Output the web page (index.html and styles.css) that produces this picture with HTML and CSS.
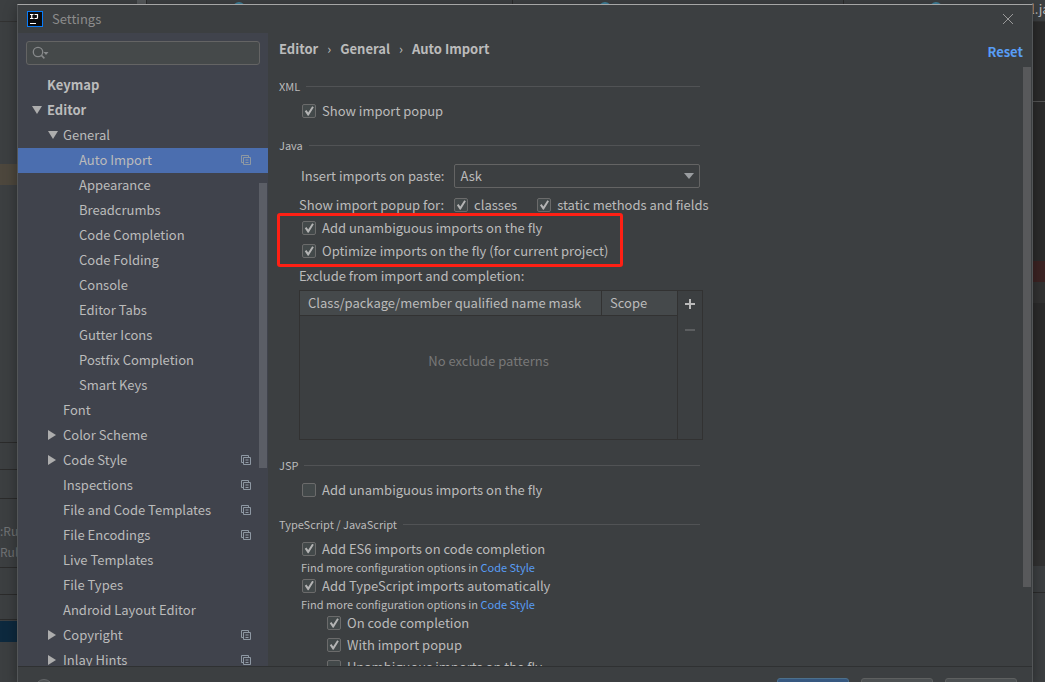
FILE: index.html
```
<!DOCTYPE html>
<html lang="en">
<head>
<meta charset="utf-8">
<title>Settings</title>
<link rel="stylesheet" href="styles.css">
</head>
<body>
<svg class="defs" aria-hidden="true">
  <symbol id="copy" viewBox="0 0 10 10"><path d="M2.5 7.5H.5V.5h7v2M2.5 2.5h7v7h-7zM4.5 5h3M4.5 7.5h3" fill="none" stroke="currentColor"/></symbol>
  <symbol id="down" viewBox="0 0 10 8"><path d="M0 0h10L5 8z" fill="currentColor"/></symbol>
  <symbol id="caret" viewBox="0 0 10 6"><path d="M0 0h10L5 6z" fill="currentColor"/></symbol>
  <symbol id="right" viewBox="0 0 8 10"><path d="M0 0v10l8-5z" fill="currentColor"/></symbol>
</svg>
<div class="ide">
  <div class="tabs">
    <span class="tabs-block"></span>
    <span class="tab"><i class="dot"></i></span>
    <span class="tab second"><i class="dot"></i></span>
    <span class="tab third"><i class="dot"></i></span>
    <span class="tab-name">l.java</span>
  </div>
  <div class="ide-body">
    <div class="left-strip">
      <span class="band brown"></span>
      <span class="rule r1"></span>
      <span class="rule r2"></span>
      <span class="rule r3"></span>
      <span class="log first">:Rule</span>
      <span class="log">Rule</span>
      <span class="rule r4"></span>
      <span class="rule r5"></span>
      <span class="rule r6"></span>
      <span class="band blue"></span>
    </div>
    <div class="right-strip">
      <span class="line"></span>
      <span class="band red"></span>
      <span class="band gray"></span>
      <span class="band gray low"></span>
      <span class="panel"><span class="rule"></span></span>
    </div>
  </div>
</div>

<div class="dialog" role="dialog" aria-label="Settings">
  <header class="titlebar">
    <svg class="logo" viewBox="0 0 16 16"><rect x=".5" y=".5" width="15" height="15" fill="#0b0b0d" stroke="#087cfa"/><path d="M3 3.500h3.500M4.750 3v5M3 7.500h3.500M7.500 3.500h3v3q0 1-1 1H7.500" fill="none" stroke="#fff" stroke-width="1.200"/><path d="M3 12.500h6" stroke="#fff"/></svg>
    <span class="title">Settings</span>
    <button class="close" aria-label="Close"><svg viewBox="0 0 10 10"><path d="M0 0l10 10M10 0L0 10" stroke="currentColor"/></svg></button>
  </header>
  <div class="body">
    <aside class="sidebar">
      <label class="search">
        <svg viewBox="0 0 18 14"><circle cx="6" cy="6" r="4.7" fill="none" stroke="currentColor" stroke-width="1.3"/><path d="M9.4 9.4l3 3" stroke="currentColor" stroke-width="1.5"/><path d="M11.500 6h5l-2.500 3z" fill="currentColor"/></svg>
        <input type="text" aria-label="Search settings">
      </label>
      <ul class="tree">
        <li class="bold l0"><span>Keymap</span></li>
        <li class="bold l0"><svg class="arrow down"><use href="#down"/></svg><span>Editor</span></li>
        <li class="l1"><svg class="arrow down"><use href="#down"/></svg><span>General</span></li>
        <li class="l2 selected"><span>Auto Import</span><svg class="copy"><use href="#copy"/></svg></li>
        <li class="l2"><span>Appearance</span></li>
        <li class="l2"><span>Breadcrumbs</span></li>
        <li class="l2"><span>Code Completion</span></li>
        <li class="l2"><span>Code Folding</span></li>
        <li class="l2"><span>Console</span></li>
        <li class="l2"><span>Editor Tabs</span></li>
        <li class="l2"><span>Gutter Icons</span></li>
        <li class="l2"><span>Postfix Completion</span></li>
        <li class="l2"><span>Smart Keys</span></li>
        <li class="l1"><span>Font</span></li>
        <li class="l1"><svg class="arrow right"><use href="#right"/></svg><span>Color Scheme</span></li>
        <li class="l1"><svg class="arrow right"><use href="#right"/></svg><span>Code Style</span><svg class="copy"><use href="#copy"/></svg></li>
        <li class="l1"><span>Inspections</span><svg class="copy"><use href="#copy"/></svg></li>
        <li class="l1"><span>File and Code Templates</span><svg class="copy"><use href="#copy"/></svg></li>
        <li class="l1"><span>File Encodings</span><svg class="copy"><use href="#copy"/></svg></li>
        <li class="l1"><span>Live Templates</span></li>
        <li class="l1"><span>File Types</span></li>
        <li class="l1"><span>Android Layout Editor</span></li>
        <li class="l1"><svg class="arrow right"><use href="#right"/></svg><span>Copyright</span><svg class="copy"><use href="#copy"/></svg></li>
        <li class="l1"><svg class="arrow right"><use href="#right"/></svg><span>Inlay Hints</span><svg class="copy"><use href="#copy"/></svg></li>
      </ul>
      <div class="thumb side-thumb"></div>
    </aside>
    <main class="main">
      <div class="head">
        <nav class="crumbs"><span>Editor</span><i>›</i><span>General</span><i>›</i><span>Auto Import</span></nav>
        <a class="reset" href="#">Reset</a>
      </div>
      <form class="content">
        <section>
          <h2>XML</h2>
          <label class="check"><input type="checkbox" checked>Show import popup</label>
        </section>
        <section>
          <h2>Java</h2>
          <div class="field"><label for="paste">Insert imports on paste:</label>
            <span class="select"><select id="paste"><option>Ask</option></select><svg class="caret"><use href="#caret"/></svg></span></div>
          <div class="popup-for"><span>Show import popup for:</span>
            <label class="check"><input type="checkbox" checked>classes</label>
            <label class="check"><input type="checkbox" checked>static methods and fields</label></div>
          <div class="marked">
            <label class="check"><input type="checkbox" checked>Add unambiguous imports on the fly</label>
            <label class="check"><input type="checkbox" checked>Optimize imports on the fly (for current project)</label>
          </div>
          <p class="exclude">Exclude from import and completion:</p>
          <div class="patterns">
            <table>
              <thead><tr><th>Class/package/member qualified name mask</th><th class="scope">Scope</th></tr></thead>
              <tbody><tr><td colspan="2">No exclude patterns</td></tr></tbody>
            </table>
            <div class="tools">
              <button type="button" aria-label="Add"><svg viewBox="0 0 10 10"><path d="M0 5h10M5 0v10" stroke="currentColor" stroke-width="2"/></svg></button>
              <button type="button" aria-label="Remove" disabled><svg viewBox="0 0 10 10"><path d="M0 5h10" stroke="currentColor" stroke-width="2"/></svg></button>
            </div>
          </div>
        </section>
        <section>
          <h2>JSP</h2>
          <label class="check"><input type="checkbox">Add unambiguous imports on the fly</label>
        </section>
        <section>
          <h2>TypeScript / JavaScript</h2>
          <label class="check tight"><input type="checkbox" checked>Add ES6 imports on code completion</label>
          <p class="hint">Find more configuration options in <a href="#">Code Style</a></p>
          <label class="check tight"><input type="checkbox" checked>Add TypeScript imports automatically</label>
          <p class="hint">Find more configuration options in <a href="#">Code Style</a></p>
          <div class="nested">
            <label class="check"><input type="checkbox" checked>On code completion</label>
            <label class="check"><input type="checkbox" checked>With import popup</label>
            <label class="check"><input type="checkbox">Unambiguous imports on the fly</label>
          </div>
        </section>
      </form>
      <div class="thumb main-thumb"></div>
    </main>
  </div>
  <footer class="footer">
    <button class="help" aria-label="Help"></button>
    <button class="btn primary" aria-label="OK"></button>
    <button class="btn" aria-label="Cancel"></button>
    <button class="btn" aria-label="Apply"></button>
  </footer>
</div>
</body>
</html>
```
FILE: styles.css
```
*, *::before, *::after { box-sizing: border-box; }
body {
  margin: 0;
  height: 100vh;
  overflow: hidden;
  position: relative;
  background: #3c3f41;
  color: #bbbbbb;
  font: 13px/20px "Noto Sans CJK SC", "Noto Sans", sans-serif;
}
h2, p, ul { margin: 0; padding: 0; font-weight: normal; }
button, input, select { font: inherit; color: inherit; margin: 0; padding: 0; }
a { color: #589df6; text-decoration: none; }
.defs { position: absolute; width: 0; height: 0; }

/* IDE window behind the dialog */
.ide { height: 100%; display: flex; flex-direction: column; }
.tabs { display: flex; height: 22px; border-bottom: 1px solid #323232; overflow: hidden; }
.tabs-block { flex: none; width: 9px; margin-left: 137px; background: #55585a; }
.tab { flex: 0 0 366px; border-left: 1px solid #2b2b2b; padding: 2px 0 0 86px; }
.tab.second { flex-basis: 331px; }
.tab.third { flex-basis: 188px; }
.dot { display: block; width: 12px; height: 12px; border-radius: 50%; background: #3e7f99; }
.tab-name { line-height: 18px; white-space: nowrap; }
.ide-body { flex: 1; display: flex; justify-content: space-between; min-height: 0; }
.left-strip, .right-strip { display: flex; flex-direction: column; overflow: hidden; }
.left-strip { width: 18px; }
.right-strip { width: 13px; background: #2b2b2b; }
.left-strip > *, .right-strip > * { flex: none; }
.band { height: 21px; }
.rule { display: block; height: 1px; background: #2b2b2b; }
.brown { background: #4d473d; margin-top: 142px; }
.r1 { margin-top: 257px; }
.r2 { margin-top: 26px; }
.r3 { margin-top: 28px; }
.log { height: 21px; color: #6f7274; font-size: 12px; white-space: nowrap; }
.log.first { margin-top: 22px; }
.r4 { margin-top: 4px; }
.r5 { margin-top: 26px; }
.r6 { margin-top: 24px; }
.blue { background: #0d293e; margin-top: 1px; }
.line { height: 1px; background: #555555; margin-top: 79px; }
.red { background: #3c2323; margin-top: 159px; }
.gray { background: #323232; }
.low { height: 26px; margin-top: 237px; }
.panel { height: 120px; background: #3c3f41; padding-top: 26px; }

/* Dialog */
.dialog {
  position: absolute;
  inset: 4px 12px 0 17px;
  display: flex;
  flex-direction: column;
  background: #3c3f41;
  border: 1px solid #535658;
  border-top-color: #a6a6a6;
  border-bottom: 0;
  box-shadow: 0 4px 12px rgba(0, 0, 0, .35);
}
.titlebar { height: 28px; display: flex; align-items: center; padding: 0 19px 0 9px; gap: 9px; color: #8c8c8c; }
.logo { width: 16px; height: 16px; }
.title { flex: 1; }
.close { border: 0; background: none; color: #9a9a9a; width: 10px; height: 10px; display: flex; }
.close svg { width: 10px; height: 10px; }
.body { flex: 1; display: flex; min-height: 0; }
.thumb { position: absolute; width: 8px; background: #5b5d5f; }

.sidebar { position: relative; width: 250px; background: #40434c; overflow: hidden; padding-top: 8px; }
.search {
  display: flex; align-items: center; gap: 4px;
  height: 24px; margin: 0 8px; padding: 0 5px;
  background: #45494a; border: 1px solid #646464; border-radius: 3px; color: #87898b;
}
.search svg { width: 18px; height: 14px; flex: none; }
.search input { flex: 1; min-width: 0; border: 0; background: none; outline: 0; }
.tree { list-style: none; margin-top: 8px; }
.tree li { display: flex; align-items: center; height: 25px; padding-right: 17px; padding-bottom: 2px; white-space: nowrap; }
.tree span { flex: 1; }
.bold { font-weight: bold; }
.tree .l0 { padding-left: 29px; }
.tree .l1 { padding-left: 45px; }
.tree .l2 { padding-left: 61px; }
.selected { background: #4b6eaf; }
.arrow { color: #adadad; margin-left: -15px; margin-right: 5px; }
.arrow.down { width: 10px; height: 8px; }
.arrow.right { width: 8px; height: 10px; margin-right: 7px; }
.copy { width: 10px; height: 10px; color: #8e98a3; }
.side-thumb { right: 1px; top: 150px; height: 285px; background: #5b5e66; }

.main { position: relative; flex: 1; min-width: 0; display: flex; flex-direction: column; overflow: hidden; }
.head { display: flex; justify-content: space-between; padding: 6px 9px 0 11px; height: 41px; font-weight: bold; }
.crumbs { display: flex; }
.crumbs i { font-style: normal; font-weight: normal; width: 22px; text-align: center; }
.reset { margin-top: 3px; }
.content { flex: 1; min-height: 0; overflow: hidden; padding-left: 11px; }
section { width: 424px; margin-bottom: 11px; }
h2 { display: flex; align-items: center; gap: 6px; height: 24px; margin-bottom: 2px; font-size: 11px; margin-right: 3px; }
h2::after { content: ""; flex: 1; height: 1px; background: #515355; }
.check { display: flex; align-items: center; height: 22px; gap: 6px; margin-left: 23px; white-space: nowrap; }
.check.tight { height: 21px; }
.check input {
  appearance: none; flex: none; width: 14px; height: 14px;
  border: 1px solid #6b6b6b; border-radius: 2px; background: #43494a;
}
.check input:checked { display: grid; place-items: center; }
.check input:checked::before {
  content: ""; width: 10px; height: 10px; background: #b4b4b4;
  clip-path: polygon(8% 52%, 24% 40%, 42% 66%, 82% 2%, 98% 12%, 46% 98%, 38% 98%);
}
.field { display: flex; align-items: center; margin: 7px 3px 6px 22px; gap: 10px; }
.select { position: relative; flex: 1; display: flex; align-items: center; }
.select select {
  appearance: none; flex: 1; height: 24px; padding-left: 5px;
  background: #3c3f41; border: 1px solid #646464; border-radius: 2px;
}
.caret { position: absolute; right: 6px; width: 10px; height: 6px; color: #9a9da0; pointer-events: none; }
.popup-for { display: flex; align-items: center; margin-left: 20px; height: 22px; margin-bottom: 1px; white-space: nowrap; }
.popup-for .check { margin-left: 10px; }
.popup-for .check + .check { margin-left: 20px; }
.marked { position: relative; display: grid; gap: 1px; }
.marked::after {
  content: ""; position: absolute; left: -2px; top: -4px; width: 346px; height: 54px;
  border: 3px solid #ff2014; border-radius: 3px; pointer-events: none;
}
.exclude { margin: 4px 0 4px 20px; }
.patterns { display: flex; height: 150px; margin: 0 0 13px 20px; border: 1px solid #323232; }
table { flex: 1; border-collapse: separate; border-spacing: 0; }
th { height: 25px; padding: 0 8px; text-align: left; font-weight: normal; background: #45494b; border-bottom: 1px solid #323232; white-space: nowrap; }
.scope { width: 76px; border-left: 1px solid #323232; }
td { padding: 0 0 34px; text-align: center; color: #787878; }
.tools { width: 25px; border-left: 1px solid #323232; padding-top: 8px; display: flex; flex-direction: column; align-items: center; gap: 16px; }
.tools button { width: 10px; height: 10px; border: 0; background: none; display: flex; }
.tools button:disabled { color: #5c5e60; }
.tools svg { width: 10px; height: 10px; }
.hint { margin-left: 22px; font-size: 11px; line-height: 16px; height: 16px; white-space: nowrap; }
.nested { padding-left: 25px; }
.main-thumb { right: 1px; top: 34px; height: 520px; background: #58595b; }

.footer { flex: none; height: 16px; display: flex; align-items: flex-start; gap: 12px; padding: 11px 15px 0 17px; border-top: 1px solid #2f3132; overflow: hidden; }
.help { width: 18px; height: 18px; flex: none; border: 1px solid #646668; border-radius: 50%; background: #4c5052; margin: 1px auto 0 0; }
.btn { width: 72px; height: 24px; flex: none; border: 1px solid #5e6060; border-radius: 3px; background: #4c5052; }
.primary { background: #365880; border-color: #4c708c; }
```
